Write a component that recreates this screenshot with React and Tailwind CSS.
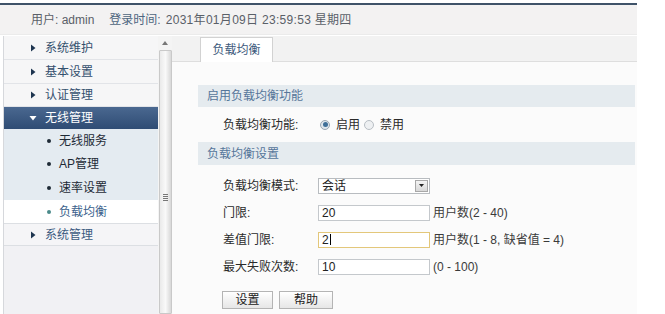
import React from "react";

const FONT = { fontFamily: '"Liberation Sans", "Noto Sans CJK SC", sans-serif' };

function Tri({ down, white }) {
  return (
    <svg width="8" height="8" viewBox="0 0 8 8" className="shrink-0">
      {down ? (
        <path d="M0.5 2 L7.5 2 L4 6.5 Z" fill={white ? "#ffffff" : "#1e3550"} />
      ) : (
        <path d="M2 0.5 L6.5 4 L2 7.5 Z" fill="#1e3550" />
      )}
    </svg>
  );
}

function TopItem({ label, h, className = "" }) {
  return (
    <div className={`flex items-center pl-[25px] gap-[8px] border-b border-[#e2e4e8] ${className}`} style={{ height: h }}>
      <Tri />
      <span className="text-[#34506e]">{label}</span>
    </div>
  );
}

function SubItem({ label, h, active }) {
  return (
    <div
      className={`flex items-center pl-[43px] gap-[8px] ${active ? "bg-white text-[#3b5f8c]" : "bg-[#e4ebf1] text-[#1e2a36]"}`}
      style={{ height: h }}
    >
      <span className={`w-[4px] h-[4px] rounded-full ${active ? "bg-[#4a8a8a]" : "bg-[#1e2a36]"}`} />
      <span>{label}</span>
    </div>
  );
}

function Row({ label, children, suffix, h = 27 }) {
  return (
    <div className="flex items-center" style={{ height: h }}>
      <div className="w-[95px] pl-[25px] box-content text-[#2a2a2a]">{label}</div>
      <div className="w-[112px]">{children}</div>
      {suffix && <div className="ml-[3px] text-[#3a3a3a]">{suffix}</div>}
    </div>
  );
}

function Input({ value, focus }) {
  return (
    <div
      className={`h-[16px] w-[112px] border ${focus ? "border-[#e3c77a]" : "border-[#c4c8cc]"} bg-white flex items-center pl-[3px] text-[#222]`}
    >
      {value}
      {focus && <span className="inline-block w-px h-[11px] bg-black ml-px" />}
    </div>
  );
}

export default function App() {
  return (
    <div className="w-[665px] h-[314px] bg-white overflow-hidden text-[12px] leading-none" style={FONT}>
      <div className="w-[637px] h-full flex flex-col">
        <div className="h-[3px] bg-white" />
        <div className="h-[2px] bg-[#3f5369]" />
        <div className="h-[30px] bg-[#f3f2f2] flex items-center pl-[31px] text-[#5a6068] border-b border-[#ebebeb]">
          <span>用户: admin</span>
          <span className="ml-[15px] text-[#4e6580]">登录时间: </span>
          <span className="ml-[5px] tracking-[0.3px]">2031年01月09日 23:59:53 星期四</span>
        </div>
        <div className="flex flex-1 min-h-0 pt-[1px]">
          {/* sidebar */}
          <div className="w-[158px] flex flex-col pl-[3px]">
            <div className="flex-1 flex flex-col border-l border-[#d6d8dc] bg-[#f1f1f4]">
              <div className="bg-[#f6f6f7]">
                <TopItem label="系统维护" h={24} />
                <TopItem label="基本设置" h={24} />
                <TopItem label="认证管理" h={23} />
              </div>
              <div className="h-[22px] flex items-center pl-[25px] gap-[8px] bg-gradient-to-b from-[#4a6890] to-[#2f4c74] text-white">
                <Tri down white />
                <span>无线管理</span>
              </div>
              <SubItem label="无线服务" h={23} />
              <SubItem label="AP管理" h={24} />
              <SubItem label="速率设置" h={24} />
              <SubItem label="负载均衡" h={23} active />
              <div className="bg-[#f5f5f7] border-t border-b border-[#dcdfe3]">
                <div className="flex items-center pl-[25px] gap-[8px] h-[21px]">
                  <Tri />
                  <span className="text-[#3b5a80]">系统管理</span>
                </div>
              </div>
            </div>
          </div>
          {/* scrollbar */}
          <div className="w-[14px] bg-[#f4f4f4] flex flex-col items-center">
            <div className="h-[14px] flex items-center justify-center">
              <svg width="6" height="4" viewBox="0 0 6 4"><path d="M0 4 L3 0 L6 4 Z" fill="#777" /></svg>
            </div>
            <div className="flex-1 w-[13px] bg-gradient-to-r from-[#eaeaea] via-[#f9f9f9] to-[#d8d8d8] border border-[#c9c9c9] rounded-[1px] flex flex-col items-center">
              <div className="mt-[143px] flex flex-col gap-[1px]">
                <div className="w-[5px] h-px bg-[#777]" />
                <div className="w-[5px] h-px bg-[#777]" />
                <div className="w-[5px] h-px bg-[#777]" />
                <div className="w-[5px] h-px bg-[#777]" />
              </div>
            </div>
          </div>
          {/* main */}
          <div className="flex-1 flex flex-col bg-[#fbfbfb]">
            <div className="h-[26px] bg-[#f2f2f2] border-b border-[#dedede] flex items-end pl-[28px]">
              <div className="h-[25px] w-[73px] bg-white border border-b-0 border-[#d2d2d2] flex items-center justify-center text-[#3d5a7c] -mb-px">
                负载均衡
              </div>
            </div>
            <div className="pl-[26px] pr-[2px] pt-[23px] flex flex-col">
              <div className="h-[22px] bg-[#e5ebef] flex items-center pl-[9px] text-[#56769a]">启用负载均衡功能</div>
              <div className="h-[35px] flex items-center">
                <div className="w-[95px] pl-[25px] box-content text-[#2a2a2a]">负载均衡功能:</div>
                <div className="flex items-center ml-[2px]">
                  <span className="w-[10px] h-[10px] rounded-full border border-[#9aa6b2] bg-[#dfe6ec] flex items-center justify-center">
                    <span className="w-[5px] h-[5px] rounded-full bg-[#3f6f98]" />
                  </span>
                  <span className="ml-[6px] text-[#2a2a2a]">启用</span>
                  <span className="ml-[4px] w-[10px] h-[10px] rounded-full border border-[#b8bec4] bg-[#eef0f2]" />
                  <span className="ml-[6px] text-[#2a2a2a]">禁用</span>
                </div>
              </div>
              <div className="h-[23px] bg-[#e5ebef] flex items-center pl-[9px] text-[#56769a]">负载均衡设置</div>
              <div className="h-[7px]" />
              <Row label="负载均衡模式:">
                <div className="h-[16px] w-[112px] border border-[#b8bcc0] bg-white flex items-center justify-between">
                  <span className="pl-[3px] text-[#222]">会话</span>
                  <span className="w-[13px] h-[12px] mr-px bg-gradient-to-b from-[#f4f4f4] to-[#d8d8d8] border border-[#a8a8a8] flex items-center justify-center">
                    <svg width="5" height="3" viewBox="0 0 5 3"><path d="M0 0 L5 0 L2.5 3 Z" fill="#222" /></svg>
                  </span>
                </div>
              </Row>
              <Row label="门限:" suffix="用户数(2 - 40)">
                <Input value="20" />
              </Row>
              <Row label="差值门限:" suffix="用户数(1 - 8, 缺省值 = 4)">
                <Input value="2" focus />
              </Row>
              <Row label="最大失败次数:" suffix="(0 - 100)">
                <Input value="10" />
              </Row>
              <div className="flex gap-[6px] pl-[24px] mt-[11px]">
                <div className="w-[51px] h-[18px] border border-[#b4b4b4] bg-gradient-to-b from-white to-[#e6e6e6] flex items-center justify-center text-[#222]">设置</div>
                <div className="w-[54px] h-[18px] border border-[#b4b4b4] bg-gradient-to-b from-white to-[#e6e6e6] flex items-center justify-center text-[#222]">帮助</div>
              </div>
            </div>
          </div>
        </div>
      </div>
    </div>
  );
}
